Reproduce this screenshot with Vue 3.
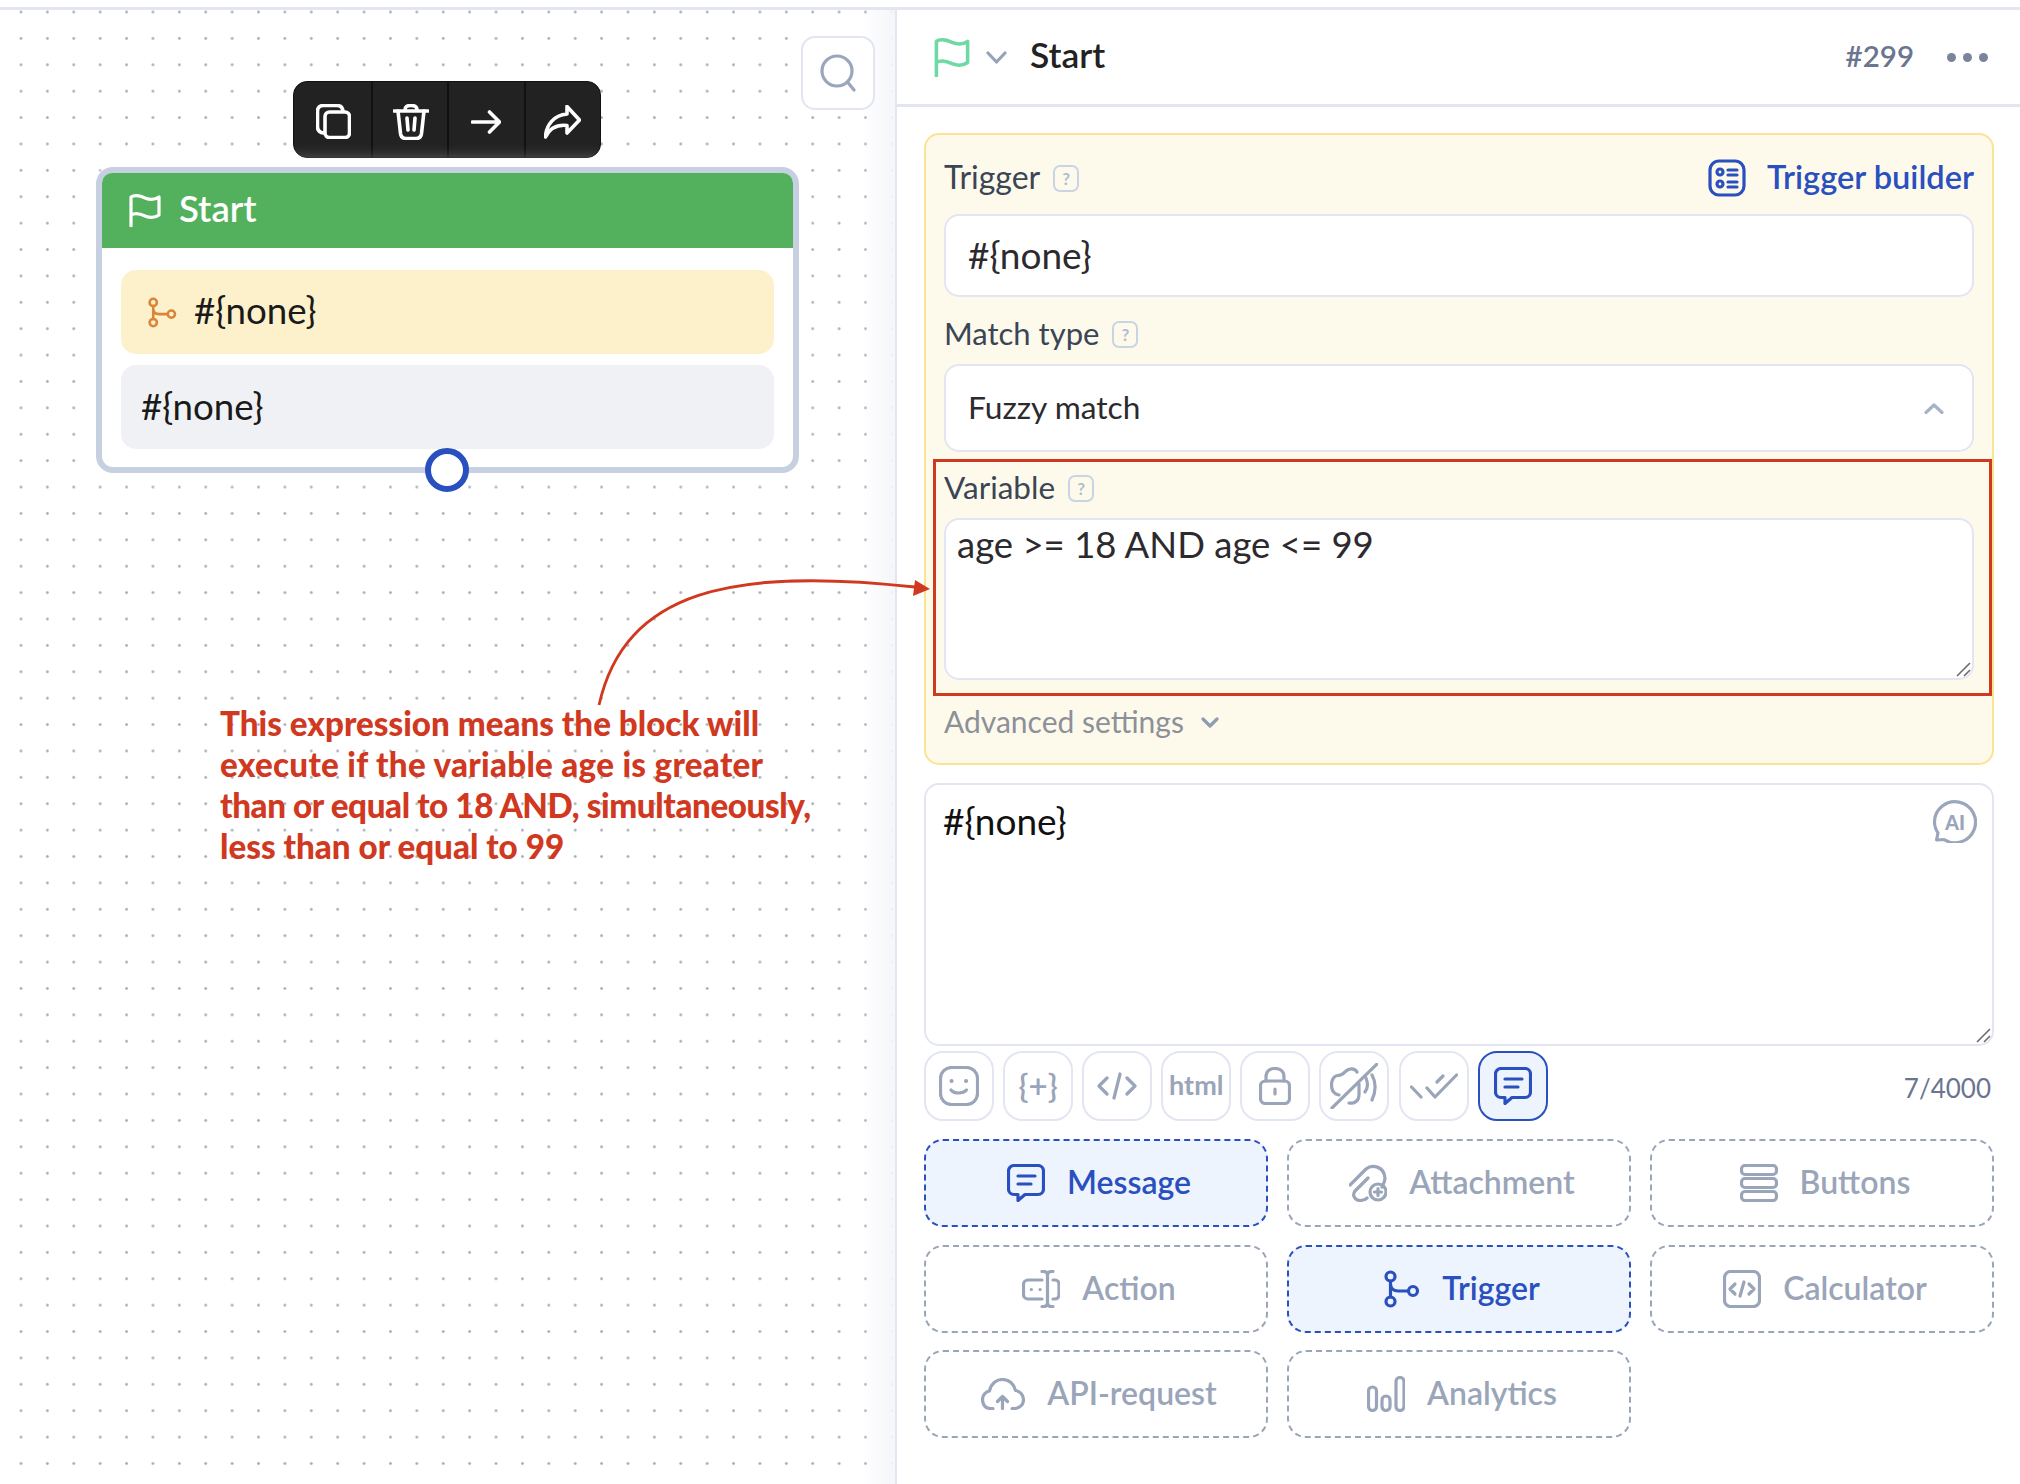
<script setup>
const svg = {
  message: { w: 38, h: 38, body: '<path d="M7 1.5H31A5.5 5.5 0 0 1 36.5 7V25A5.5 5.5 0 0 1 31 30.5H18L11 36.5V30.5H7A5.5 5.5 0 0 1 1.5 25V7A5.5 5.5 0 0 1 7 1.5Z"/><path d="M11 12H28M11 20H24"/>' },
  attachment: { w: 38, h: 38, body: '<path d="M1 21L17 5C23 0 35 2 36 14C36 18 34 21 33 23"/><path d="M19 14L6 27C2 33 8 38 14 36C15 36 17 35 18 34"/><circle cx="29" cy="28" r="8"/><path d="M29 24.5V31.5M25.5 28H32.5"/>' },
  buttons: { w: 38, h: 38, body: '<rect x="1.5" y="1.5" width="35" height="9" rx="3.5"/><rect x="1.5" y="14.5" width="35" height="9" rx="3.5"/><rect x="1.5" y="27.5" width="35" height="9" rx="3.5"/>' },
  action: { w: 38, h: 38, body: '<path d="M20 10H6A4.500 4.500 0 0 0 1.500 14.500V24.500A4.500 4.500 0 0 0 6 29H20"/><path d="M31 10H33A4 4 0 0 1 37 14V25A4 4 0 0 1 33 29H31"/><path d="M25.500 5V33M20 1.500H21.500C24 1.500 25.500 3 25.500 5C25.500 3 27 1.500 29.500 1.500H31M20 36.500H21.500C24 36.500 25.500 35 25.500 33C25.500 35 27 36.500 29.500 36.500H31"/><path d="M9.300 19.500H9.400M18 19.500H18.100"/>' },
  trigger: { w: 36, h: 38, body: '<circle cx="6.500" cy="6.500" r="4.500"/><circle cx="6.500" cy="31.500" r="4.500"/><circle cx="29" cy="21" r="4.500"/><path d="M6.500 11V27M6.500 14C6.500 19 10 21 14 21H24.500"/>' },
  calculator: { w: 38, h: 38, body: '<rect x="1.500" y="1.500" width="35" height="35" rx="6"/><path d="M12 14L7 19L12 24M26 14L31 19L26 24M21 12L17 26"/>' },
  api: { w: 44, h: 32, body: '<path d="M12 30.500H9C4 30.500 1.500 26 1.500 21.500C1.500 17 5 13.500 8.500 13C10 5 16 1.500 21.500 1.500C28 1.500 33 6 34.500 12.500C39 13 42.500 17 42.500 22C42.500 27 38 30.500 33 30.500H31"/><path d="M21.500 30.500V19M16.500 23.500L21.500 18.500L26.500 23.500"/>' },
  analytics: { w: 38, h: 36, body: '<rect x="1.500" y="11" width="8" height="23.500" rx="4"/><rect x="15" y="20" width="8" height="14.500" rx="4"/><rect x="29" y="1.500" width="8" height="33" rx="4"/>' },
  smile: { w: 40, h: 40, body: '<rect x="1.500" y="1.500" width="37" height="37" rx="11"/><path d="M12.500 15H12.600M27 15H27.100" stroke-width="4"/><path d="M12 24C15 28 24 28 27.500 24"/>' },
  code: { w: 40, h: 28, body: '<path d="M10 6L2 14L10 22M30 6L38 14L30 22M23 2L17 26"/>' },
  lock: { w: 32, h: 38, body: '<rect x="1.500" y="14" width="29" height="22.500" rx="5"/><path d="M7 14V10C7 4 11 1.500 16 1.500C21 1.500 25 4 25 10V14M16 22V27"/>' },
  mute: { w: 48, h: 46, body: '<path d="M9 32C4 31 1.500 27 1.500 22C1.500 17 4 12.500 8 12.500C12 12.500 14 10 16 8C19 5 25 5 27 9"/><path d="M29 21V32C29 38 24 41 19 40"/><path d="M36 15C38 20 38 25 35 29M42 12C46 19 46 28 42 37"/><path d="M2 45L47 1"/>' },
  checks: { w: 48, h: 26, body: '<path d="M1.500 14L11 24M17 15L25 24L46.500 2M27 9L33 3"/>' },
}
const tools = [
  { icon: 'smile' },
  { text: '{+}', cls: 'brace' },
  { icon: 'code' },
  { text: 'html', cls: 'html' },
  { icon: 'lock' },
  { icon: 'mute' },
  { icon: 'checks' },
  { icon: 'message', active: true },
]
const blocks = [
  { label: 'Message', icon: 'message', active: true },
  { label: 'Attachment', icon: 'attachment' },
  { label: 'Buttons', icon: 'buttons' },
  { label: 'Action', icon: 'action' },
  { label: 'Trigger', icon: 'trigger', active: true },
  { label: 'Calculator', icon: 'calculator' },
  { label: 'API-request', icon: 'api' },
  { label: 'Analytics', icon: 'analytics' },
]
</script>

<template>
  <div class="app">
    <section class="canvas">
      <button class="search">
        <svg class="ico" width="36" height="38" viewBox="0 0 36 38"><circle cx="17" cy="17" r="15"/><path d="M27.500 28L34 36"/></svg>
      </button>
      <div class="float-bar">
        <span class="float-cell copy"><svg class="ico" width="35" height="35" viewBox="0 0 35 35"><rect x="9" y="8" width="24.500" height="25.500" rx="4.500"/><path d="M7.500 29C3.500 28.500 1.500 26.500 1.500 22.500V7.500C1.500 3.500 3.500 1.500 7.500 1.500H21C24.500 1.500 26.500 3.500 27 7"/></svg></span>
        <span class="float-cell copy"><svg class="ico" width="36" height="36" viewBox="0 0 36 36"><path d="M1 7H35M12 6C12 2.500 14 1.500 18 1.500C22 1.500 24 2.500 24 6"/><path d="M5 7L7.500 29.500C8 33 9.500 34.500 13 34.500H23C26.500 34.500 28 33 28.500 29.500L31 7"/><path d="M14 14L15 26M22 14L21 26"/></svg></span>
        <span class="float-cell"><svg class="ico" width="30" height="24" viewBox="0 0 30 24"><path d="M1.500 12H28M18.500 2L28.500 12L18.500 22"/></svg></span>
        <span class="float-cell"><svg class="ico" width="37" height="34" viewBox="0 0 37 34"><path d="M23 1.500L35.500 15L23 28V20.500C14 19.500 6 23 1.500 32C2 20 10 10 23 9Z"/></svg></span>
      </div>

      <article class="node">
        <header class="node-head">
          <svg class="ico flag-w" width="32" height="33" viewBox="0 0 32 33"><path d="M2 32V3C7 0 12 2 16 4C21 6 26 6 30 3V21C26 24 21 24 16 22C12 20 7 18 2 21"/></svg>
          <span>Start</span>
        </header>
        <div class="node-body">
          <div class="node-item yellow">
            <svg class="ico branch" width="29" height="31" viewBox="0 0 36 38"><circle cx="6.500" cy="6.500" r="4.500"/><circle cx="6.500" cy="31.500" r="4.500"/><circle cx="29" cy="21" r="4.500"/><path d="M6.500 11V27M6.500 14C6.500 19 10 21 14 21H24.500"/></svg>
            <span>#{none}</span>
          </div>
          <div class="node-item grey"><span>#{none}</span></div>
        </div>
        <span class="port"></span>
      </article>

      <p class="note">
        <span>This expression means the block will</span>
        <span class="wide">execute if the variable age is greater</span>
        <span class="tight">than or equal to 18 AND, simultaneously,</span>
        <span>less than or equal to 99</span>
      </p>
    </section>

    <aside class="panel">
      <header class="panel-head">
        <svg class="ico flag-g" width="36" height="39" viewBox="0 0 32 35"><path d="M2 34V3C7 0 12 2 16 4C21 6 26 6 30 3V22C26 25 21 25 16 23C12 21 7 19 2 22"/></svg>
        <svg class="ico chev" width="21" height="13" viewBox="0 0 21 13"><path d="M2 2L10.500 11L19 2"/></svg>
        <span class="panel-title">Start</span>
        <span class="panel-id">#299</span>
        <span class="more"><i></i><i></i><i></i></span>
      </header>

      <div class="panel-body">
        <section class="cond">
          <div class="label-row first">
            <span>Trigger</span><span class="help">?</span>
            <span class="builder">
              <svg class="ico" width="38" height="38" viewBox="0 0 38 38"><rect x="2" y="2" width="34" height="34" rx="9"/><circle cx="12" cy="13" r="3"/><circle cx="12" cy="25" r="3"/><path d="M20 11H29M20 16H29M20 23H29M20 28H29"/></svg>
              <span>Trigger builder</span>
            </span>
          </div>
          <div class="field input">#{none}</div>
          <div class="label-row match"><span>Match type</span><span class="help">?</span></div>
          <div class="field select">
            <span>Fuzzy match</span>
            <svg class="ico up" width="20" height="11" viewBox="0 0 20 11"><path d="M2 9.500L10 2L18 9.500"/></svg>
          </div>
          <div class="label-row variable"><span>Variable</span><span class="help">?</span></div>
          <div class="field area">
            <span>age &gt;= 18 AND age &lt;= 99</span>
            <svg class="grip" width="15" height="15" viewBox="0 0 15 15"><path d="M1 14L14 1M8 14L14 8"/></svg>
          </div>
          <div class="advanced">
            <span>Advanced settings</span>
            <svg class="ico adv-chev" width="18" height="11" viewBox="0 0 18 11"><path d="M2 2L9 9L16 2"/></svg>
          </div>
        </section>

        <section class="msg">
          <span>#{none}</span>
          <span class="ai">
            <svg class="ico" width="44" height="43" viewBox="0 0 44 43"><path d="M5 33C2.500 29.500 1.500 26 1.500 22A20.500 20.500 0 1 1 11 39.500L3.500 40Z"/></svg>
            <b>AI</b>
          </span>
          <svg class="grip" width="15" height="15" viewBox="0 0 15 15"><path d="M1 14L14 1M8 14L14 8"/></svg>
        </section>

        <div class="tools">
          <span v-for="(t, i) in tools" :key="i" class="tool" :class="{ on: t.active }">
            <span v-if="t.text" :class="t.cls">{{ t.text }}</span>
            <svg v-else class="ico" :width="svg[t.icon].w" :height="svg[t.icon].h" :viewBox="`0 0 ${svg[t.icon].w} ${svg[t.icon].h}`" v-html="svg[t.icon].body"></svg>
          </span>
          <span class="count">7/4000</span>
        </div>

        <div class="blocks">
          <div v-for="b in blocks" :key="b.label" class="block" :class="{ on: b.active }">
            <svg class="ico" :width="svg[b.icon].w" :height="svg[b.icon].h" :viewBox="`0 0 ${svg[b.icon].w} ${svg[b.icon].h}`" v-html="svg[b.icon].body"></svg>
            <span>{{ b.label }}</span>
          </div>
        </div>
      </div>
    </aside>

    <span class="redbox"></span>
    <svg class="arrow" width="400" height="140" viewBox="0 0 400 140">
      <path d="M66 135C92 20 200 -3 382 17" fill="none" stroke="#d0391f" stroke-width="2.800"/>
      <path d="M397 19L382 10L380 26Z" fill="#d0391f"/>
    </svg>
  </div>
</template>

<style scoped>
.app {
  position: relative;
  display: grid;
  grid-template-columns: 897px 1fr;
  width: 2020px;
  height: 1484px;
  padding-top: 7px;
  box-sizing: border-box;
  background: #fff;
  font-family: "Lato", "Noto Sans", sans-serif;
  color: #222;
  overflow: hidden;
}
.ico {
  fill: none;
  stroke: currentColor;
  stroke-width: 3.2;
  stroke-linecap: round;
  stroke-linejoin: round;
  flex: none;
}

/* canvas */
.canvas {
  position: relative;
  border-top: 3px solid #e3e6f2;
  border-right: 2px solid #e3e6f2;
  background-color: #fff;
  background-image:
    linear-gradient(90deg, rgba(245, 246, 250, 0) 0, rgba(245, 246, 250, 0) 860px, #f5f6fa 895px),
    radial-gradient(circle, #aab1bc 1.1px, rgba(255, 255, 255, 0) 1.6px);
  background-size: 100% 100%, 26.400px 26.400px;
  background-position: 0 0, 7.800px -11.200px;
}
.search {
  position: absolute;
  left: 801px;
  top: 26px;
  width: 74px;
  height: 74px;
  padding: 0;
  display: flex;
  align-items: center;
  justify-content: center;
  background: #fff;
  border: 2.500px solid #e3e6f2;
  border-radius: 14px;
  color: #9aa6bb;
}
.float-bar {
  position: absolute;
  left: 293px;
  top: 71px;
  width: 308px;
  height: 77px;
  display: flex;
  background: #222;
  border: 1px solid #111;
  border-radius: 14px;
  box-sizing: border-box;
  color: #fff;
}
.float-cell {
  flex: none;
  width: 25%;
  display: flex;
  align-items: center;
  justify-content: center;
  box-sizing: border-box;
  padding-top: 4px;
  border-left: 2px solid #111;
}
.float-cell .ico { stroke-width: 3.6; }
.float-cell.copy .ico { margin-left: 3px; }
.float-cell:first-child { border-left: 0; }
.node {
  position: absolute;
  left: 96px;
  top: 157px;
  width: 703px;
  height: 306px;
  box-sizing: border-box;
  background: #fff;
  border: 6px solid #c6d0e1;
  border-radius: 17px;
  box-shadow: 0 0 20px rgba(255, 255, 255, 0.9);
}
.node-head {
  display: flex;
  align-items: center;
  gap: 18px;
  height: 75px;
  padding-left: 27px;
  background: #53b15d;
  border-radius: 10px 10px 0 0;
  color: #fff;
  font-size: 36.500px;
  font-weight: 600;
}
.node-head span { margin-bottom: 5px; }
.node-body {
  display: flex;
  flex-direction: column;
  gap: 11px;
  padding: 22px 19px 0 19px;
}
.node-item {
  display: flex;
  align-items: center;
  gap: 17px;
  height: 84px;
  border-radius: 15px;
  font-size: 36.700px;
  color: #1a1a1a;
}
.yellow { background: #fcf1cb; padding-left: 27px; }
.yellow span { margin-bottom: 5px; }
.grey { background: #f0f1f5; padding-left: 20px; }
.grey span { margin-bottom: 3px; }
.branch { color: #d9853a; }
.port {
  position: absolute;
  left: 323px;
  top: 275px;
  width: 44px;
  height: 44px;
  box-sizing: border-box;
  background: #fff;
  border: 6px solid #2a4fbf;
  border-radius: 50%;
}
.note {
  position: absolute;
  left: 220px;
  top: 693px;
  margin: 0;
  font-size: 33.200px;
  line-height: 41px;
  font-weight: 900;
  color: #d0391f;
  white-space: nowrap;
}
.note span { display: block; }
.note .wide { letter-spacing: 0.280px; }
.note .tight { letter-spacing: -0.400px; }

/* panel */
.panel { display: flex; flex-direction: column; min-width: 0; }
.panel-head {
  display: flex;
  align-items: center;
  height: 94px;
  box-sizing: content-box;
  padding: 0 32px 0 37px;
  border-top: 3px solid #e3e6f2;
  border-bottom: 3px solid #e3e6f2;
}
.flag-g { color: #6fd9a5; margin-right: 16px; }
.chev { color: #97a3b8; margin-right: 23px; }
.panel-title { font-size: 35.400px; font-weight: 600; color: #222; margin-bottom: 5px; }
.panel-id { margin-left: auto; font-size: 29.500px; font-weight: 600; color: #6b7590; margin-bottom: 3px; }
.more { display: flex; gap: 7px; margin-left: 33px; }
.more i { width: 9px; height: 9px; border-radius: 50%; background: #7a849c; }
.panel-body { padding: 26px 26px 0 27px; }
.cond {
  box-sizing: border-box;
  height: 632px;
  padding: 23px 18px 0 18px;
  background: #fefaeb;
  border: 2.500px solid #fbe394;
  border-radius: 15px;
}
.label-row {
  display: flex;
  align-items: center;
  box-sizing: border-box;
  height: 40px;
  font-size: 31.500px;
  color: #3b4556;
}
.label-row > span:first-child { margin-bottom: 3px; }
.label-row.match { margin-top: 17px; margin-bottom: 10px; font-size: 31px; }
.label-row.variable { margin-top: 16px; margin-bottom: 10px; }
.label-row.first { margin-bottom: 16px; font-size: 32px; }
.help {
  display: inline-flex;
  align-items: center;
  justify-content: center;
  width: 26px;
  height: 27px;
  box-sizing: border-box;
  margin-left: 13px;
  border: 2.500px solid #c9d4e5;
  border-radius: 7px;
  color: #aebcd2;
  font-size: 17px;
  font-weight: 700;
}
.builder {
  display: flex;
  align-items: center;
  gap: 21px;
  margin-left: auto;
  color: #2a4fbf;
  font-size: 32.600px;
  font-weight: 600;
}
.builder span { margin-bottom: 3px; }
.field {
  position: relative;
  box-sizing: border-box;
  display: flex;
  background: #fff;
  border: 2.500px solid #e3e6f2;
  border-radius: 15px;
  color: #2d2a2e;
}
.input { height: 83px; align-items: center; padding: 0 0 3px 22px; font-size: 37px; }
.select { height: 88px; align-items: center; justify-content: space-between; padding: 0 28px 0 22px; font-size: 31.700px; }
.select span { margin-bottom: 3px; }
.up { color: #a7b2c6; }
.area { height: 162px; padding: 1px 0 0 11px; font-size: 36.500px; line-height: 46px; border-radius: 15px; }
.grip {
  position: absolute;
  right: 1px;
  bottom: 1px;
  fill: none;
  stroke: #6d6d6d;
  stroke-width: 1.600;
}
.advanced {
  display: flex;
  align-items: center;
  gap: 17px;
  height: 40px;
  margin-top: 22px;
  font-size: 30px;
  color: #8c9098;
}
.advanced span { margin-bottom: 3px; }
.adv-chev { color: #8f9cb5; }
.msg {
  position: relative;
  box-sizing: border-box;
  height: 263px;
  margin-top: 18px;
  padding: 13px 0 0 17px;
  background: #fff;
  border: 2.500px solid #e3e6f2;
  border-radius: 15px;
  font-size: 37px;
  line-height: 46px;
  color: #111;
}
.ai {
  position: absolute;
  top: 15px;
  right: 15px;
  display: flex;
  align-items: center;
  justify-content: center;
  width: 44px;
  height: 43px;
  color: #9aa6bb;
}
.ai svg { position: absolute; inset: 0; }
.ai b { font-size: 20px; line-height: 1; font-weight: 900; }
.tools {
  display: flex;
  align-items: center;
  gap: 9.100px;
  margin-top: 5px;
}
.tool {
  display: flex;
  align-items: center;
  justify-content: center;
  width: 70px;
  height: 70px;
  box-sizing: border-box;
  background: #fff;
  border: 2.500px solid #e3e6f2;
  border-radius: 19px;
  color: #9aa5b9;
}
.tool.on { background: #edf4fd; border-color: #2a4fbf; color: #2a4fbf; }
.brace { font-size: 33px; font-weight: 600; margin-bottom: 3px; }
.html { font-size: 27px; font-weight: 700; margin-bottom: 3px; }
.count { margin-left: auto; margin-right: 3px; margin-top: 4px; font-size: 26px; color: #6b7590; }
.blocks {
  display: grid;
  grid-template-columns: repeat(3, 1fr);
  gap: 17.500px 19px;
  margin-top: 18px;
}
.block {
  display: flex;
  align-items: center;
  justify-content: center;
  gap: 22px;
  height: 88px;
  box-sizing: border-box;
  padding-left: 6px;
  border: 2.500px dashed #9aa5b9;
  border-radius: 19px;
  font-size: 32px;
  font-weight: 600;
  color: #9aa5b9;
}
.block span { margin-bottom: 3px; }
.block.on { background: #edf4fd; border-color: #2a4fbf; color: #2a4fbf; }

/* annotations over the app */
.redbox {
  position: absolute;
  left: 933px;
  top: 459px;
  width: 1059px;
  height: 237px;
  box-sizing: border-box;
  border: 3px solid #d0391f;
  pointer-events: none;
}
.arrow {
  position: absolute;
  left: 533px;
  top: 570px;
  overflow: visible;
  pointer-events: none;
}
</style>
